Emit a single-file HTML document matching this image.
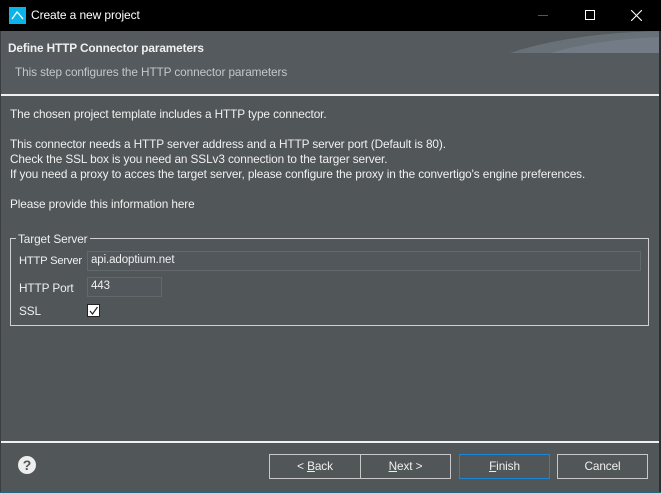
<!DOCTYPE html>
<html><head><style>
*{margin:0;padding:0;box-sizing:border-box}
body{width:661px;height:493px;background:#515658;font-family:"Liberation Sans",sans-serif;font-size:11.8px;letter-spacing:-0.1px;color:#f0f0f0;position:relative;overflow:hidden}
.a{position:absolute;white-space:nowrap}
.tb{left:0;top:0;width:661px;height:31px;background:#000}
.hdr{left:0;top:31px;width:661px;height:64px;background:#545a5d}
.btn{position:absolute;top:454px;height:25px;border:1px solid #c8c8c8;background:#515658;text-align:center;line-height:23px;color:#f0f0f0}
.in{position:absolute;border:1px solid #63686b;background:#51575a;color:#f0f0f0;padding-left:3px;line-height:16px;font-size:11.5px}
</style></head><body>
<div class="a tb"></div>
<svg class="a" style="left:9px;top:7px" width="17" height="17"><rect width="17" height="17" fill="#0ab4e8"/><path d="M3 12 L8 5 L10 7 L14 12" stroke="#fff" stroke-width="1.3" fill="none"/></svg>
<div class="a" style="left:31px;top:8px;font-size:12px;color:#fff">Create a new project</div>
<div class="a" style="left:538px;top:15px;width:10px;height:1px;background:#555"></div>
<div class="a" style="left:585px;top:10px;width:10px;height:10px;border:1px solid #fff"></div>
<svg class="a" style="left:631px;top:10px" width="11" height="11"><path d="M0 0L11 11M11 0L0 11" stroke="#fff" stroke-width="1.1"/></svg>
<div class="a hdr"></div>
<svg class="a" style="left:510px;top:31px" width="151" height="22"><path d="M0 22 Q60 2 151 0 L151 22Z" fill="#697178"/><path d="M40 22 Q90 8 151 6 L151 22Z" fill="#737c86"/></svg>
<div class="a" style="left:8px;top:41px;font-weight:bold">Define HTTP Connector parameters</div>
<div class="a" style="left:15px;top:65px;color:#c4c8ca">This step configures the HTTP connector parameters</div>
<div class="a" style="left:0;top:94px;width:661px;height:2px;background:#f0f0f0"></div>
<div class="a" style="left:10px;top:107px">The chosen project template includes a HTTP type connector.</div>
<div class="a" style="left:10px;top:137px">This connector needs a HTTP server address and a HTTP server port (Default is 80).</div>
<div class="a" style="left:10px;top:152px">Check the SSL box is you need an SSLv3 connection to the targer server.</div>
<div class="a" style="left:10px;top:167px">If you need a proxy to acces the target server, please configure the proxy in the convertigo's engine preferences.</div>
<div class="a" style="left:10px;top:197px">Please provide this information here</div>
<div class="a" style="left:10px;top:238px;width:639px;height:88px;border:1px solid #d0d0d0"></div>
<div class="a" style="left:16px;top:232px;background:#515658;padding:0 2px">Target Server</div>
<div class="a" style="left:19px;top:255px;font-size:11.2px;letter-spacing:-0.2px">HTTP Server</div>
<div class="in" style="left:87px;top:251px;width:554px;height:20px">api.adoptium.net</div>
<div class="a" style="left:19px;top:281px">HTTP Port</div>
<div class="in" style="left:87px;top:277px;width:75px;height:20px">443</div>
<div class="a" style="left:19px;top:304px">SSL</div>
<div class="a" style="left:87px;top:304px;width:13px;height:13px;border:1px solid #222;background:#fff"></div>
<svg class="a" style="left:88px;top:305px" width="11" height="11"><path d="M2 6L4.5 9L9.5 2" stroke="#222" stroke-width="1.2" fill="none"/></svg>
<div class="a" style="left:0;top:441px;width:661px;height:2px;background:#f0f0f0"></div>
<svg class="a" style="left:17px;top:455px" width="20" height="20"><circle cx="10" cy="10" r="9" fill="#eee"/><text x="10" y="15" font-family="Liberation Sans" font-weight="bold" font-size="14" text-anchor="middle" fill="#515658">?</text></svg>
<div class="btn" style="left:269px;width:92px">&lt; <u>B</u>ack</div>
<div class="btn" style="left:360px;width:91px"><u>N</u>ext &gt;</div>
<div class="btn" style="left:459px;width:91px;border-color:#1a86d8"><u>F</u>inish</div>
<div class="btn" style="left:557px;width:91px">Cancel</div>
<div class="a" style="left:659px;top:31px;width:2px;height:462px;background:#2c2f31"></div>
<div class="a" style="left:0;top:31px;width:1px;height:462px;background:#3a3e40"></div>
<div class="a" style="left:0;top:492px;width:661px;height:1px;background:#1b6a80"></div>
</body></html>
